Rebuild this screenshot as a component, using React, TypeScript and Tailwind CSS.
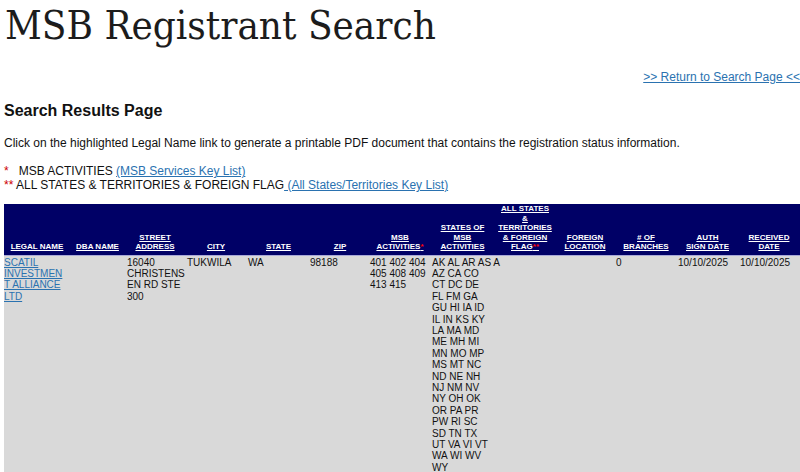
const headers: { label: React.ReactNode; w: number }[] = [
  { label: "LEGAL NAME", w: 66 },
  { label: "DBA NAME", w: 55 },
  { label: <>STREET<br />ADDRESS</>, w: 60 },
  { label: "CITY", w: 62 },
  { label: "STATE", w: 63 },
  { label: "ZIP", w: 60 },
  { label: <>MSB<br />ACTIVITIES<span className="text-[#ff0000]">*</span></>, w: 60 },
  { label: <>STATES OF<br />MSB<br />ACTIVITIES</>, w: 65 },
  { label: <>ALL STATES<br />&amp;<br />TERRITORIES<br />&amp; FOREIGN<br />FLAG<span className="text-[#ff0000]">**</span></>, w: 60 },
  { label: <>FOREIGN<br />LOCATION</>, w: 60 },
  { label: <># OF<br />BRANCHES</>, w: 62 },
  { label: <>AUTH<br />SIGN DATE</>, w: 61 },
  { label: <>RECEIVED<br />DATE</>, w: 62 },
];

const states = [
  "AK AL AR AS A",
  "AZ CA CO",
  "CT DC DE",
  "FL FM GA",
  "GU HI IA ID",
  "IL IN KS KY",
  "LA MA MD",
  "ME MH MI",
  "MN MO MP",
  "MS MT NC",
  "ND NE NH",
  "NJ NM NV",
  "NY OH OK",
  "OR PA PR",
  "PW RI SC",
  "SD TN TX",
  "UT VA VI VT",
  "WA WI WV",
  "WY",
];

function Lines({ lines }: { lines: string[] }) {
  return (
    <>
      {lines.map((l, i) => (
        <div key={i} className="whitespace-nowrap">{l}</div>
      ))}
    </>
  );
}

export default function App() {
  return (
    <div className="min-h-[472px] bg-white font-['Liberation_Sans',Arial,sans-serif] text-[#111]">
      <h1 className="pl-[5px] pt-[1px] font-['DejaVu_Serif',serif] [font-stretch:condensed] text-[40px] leading-[48px] text-[#1c1c1c]">
        MSB Registrant Search
      </h1>
      <div className="mt-[21px] flex justify-end">
        <a href="#" className="text-[12px] leading-[15px] text-[#2a72b0] underline">
          &gt;&gt; Return to Search Page &lt;&lt;
        </a>
      </div>
      <div className="pl-1">
        <h2 className="mt-[16px] text-[16px] font-bold leading-[19px]">Search Results Page</h2>
        <p className="mt-[16px] text-[12px] leading-[15px]">
          Click on the highlighted Legal Name link to generate a printable PDF document that contains the registration status information.
        </p>
        <div className="mt-[13px] text-[12px] leading-[14px]">
          <div>
            <span className="text-[#cc0000]">*</span>
            <span className="ml-[10px]">MSB ACTIVITIES </span>
            <a href="#" className="text-[#2a72b0] underline">(MSB Services Key List)</a>
          </div>
          <div>
            <span className="text-[#cc0000]">**</span> ALL STATES &amp; TERRITORIES &amp; FOREIGN FLAG
            <a href="#" className="text-[#2a72b0] underline"> (All States/Territories Key List)</a>
          </div>
        </div>
      </div>
      <table className="mt-[12px] ml-1 w-[796px] table-fixed border-collapse">
        <colgroup>
          {headers.map((h, i) => (
            <col key={i} style={{ width: h.w }} />
          ))}
        </colgroup>
        <thead>
          <tr className="bg-[#000066] border-b border-[#a8a8d8]">
            {headers.map((h, i) => (
              <th
                key={i}
                className="h-[49px] px-[1px] pb-[3px] align-bottom text-center text-[8px] font-bold leading-[9.5px] text-white underline"
              >
                {h.label}
              </th>
            ))}
          </tr>
        </thead>
        <tbody>
          <tr className="bg-[#d9d9d9] align-top text-[10px] leading-[11.4px] text-[#111]">
            <td className="h-[220px] pt-[1px]">
              <a href="#" className="text-[#2a72b0] underline">
                <Lines lines={["SCATIL", "INVESTMEN", "T ALLIANCE", "LTD"]} />
              </a>
            </td>
            <td className="pt-[1px]"></td>
            <td className="pt-[1px] pl-[2px]">
              <Lines lines={["16040", "CHRISTENS", "EN RD STE", "300"]} />
            </td>
            <td className="pt-[1px] pl-[2px]">TUKWILA</td>
            <td className="pt-[1px] pl-[1px]">WA</td>
            <td className="pt-[1px]">98188</td>
            <td className="pt-[1px]">
              <Lines lines={["401 402 404", "405 408 409", "413 415"]} />
            </td>
            <td className="pt-[1px] pl-[2px]">
              <Lines lines={states} />
            </td>
            <td className="pt-[1px]"></td>
            <td className="pt-[1px]"></td>
            <td className="pt-[1px] pl-[1px]">0</td>
            <td className="pt-[1px] pl-[1px]">10/10/2025</td>
            <td className="pt-[1px] pl-[2px]">10/10/2025</td>
          </tr>
        </tbody>
      </table>
    </div>
  );
}
